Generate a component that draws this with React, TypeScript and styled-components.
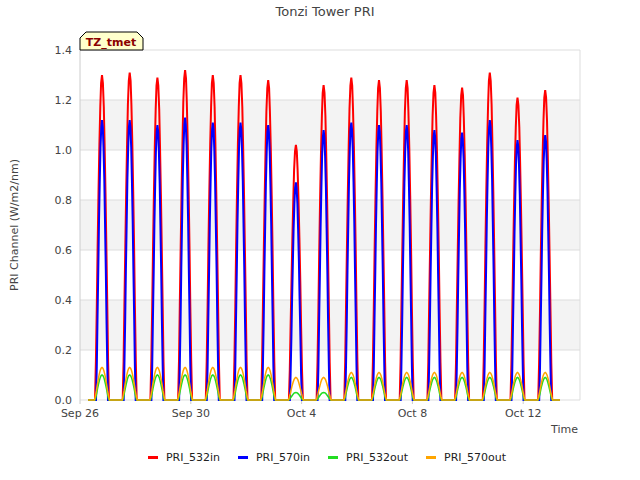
import React from "react";
import styled, { createGlobalStyle } from "styled-components";

const Global = createGlobalStyle`
  html, body { margin: 0; padding: 0; background: #fff; }
  body { font-family: "DejaVu Sans", sans-serif; }
`;
const Page = styled.div`
  width: 640px; height: 480px; display: flex; flex-direction: column; align-items: center;
`;
const Title = styled.div`
  height: 25px; line-height: 24px; font-size: 13px; color: #444; padding-left: 10px;
`;
const Legend = styled.div`
  display: flex; gap: 18px; font-size: 11px; color: #222; margin-top: 6px; padding-left: 14px;
`;
const Item = styled.div`
  display: flex; align-items: center; gap: 8px;
`;
const Swatch = styled.span<{ c: string }>`
  width: 10px; height: 3px; background: ${(p) => p.c};
`;

const X0 = 80, X1 = 580, Y0 = 400;
const py = (v: number) => Y0 - v * 250;
const red = [1.30,1.31,1.29,1.32,1.30,1.30,1.28,1.02,1.26,1.29,1.28,1.28,1.26,1.25,1.31,1.21,1.24];
const blue = [1.12,1.12,1.10,1.13,1.11,1.11,1.10,0.87,1.08,1.11,1.10,1.10,1.08,1.07,1.12,1.04,1.06];
const green = red.map((_, i) => (i === 7 || i === 8 ? 0.03 : i < 9 ? 0.1 : 0.09));
const orange = red.map((_, i) => (i === 7 || i === 8 ? 0.09 : i < 9 ? 0.13 : 0.11));

function series(h: number[], hw: number) {
  let d = `M${X0 + 8},${Y0}`;
  h.forEach((v, i) => {
    const c = 102 + i * 27.7;
    d += ` L${(c - hw).toFixed(1)},${Y0}`;
    for (let k = 0; k <= 16; k++) {
      const t = k / 16;
      const x = c - hw + t * hw * 2;
      const y = py(v * Math.pow(Math.sin(Math.PI * t), 1.3));
      d += ` L${x.toFixed(1)},${y.toFixed(1)}`;
    }
  });
  d += ` L560,${Y0}`;
  return d;
}

const Chart = () => (
  <svg width={640} height={420} viewBox="0 25 640 420">
    {[0, 1, 2, 3, 4, 5, 6].map((i) => (
      <rect key={i} x={X0} y={py((i + 1) * 0.2)} width={X1 - X0} height={50} fill={i % 2 === 0 ? "#fff" : "#f3f3f3"} />
    ))}
    {[0, 1, 2, 3, 4, 5, 6, 7].map((i) => (
      <g key={i}>
        <line x1={X0} x2={X1} y1={py(i * 0.2)} y2={py(i * 0.2)} stroke="#ddd" />
        <text x={72} y={py(i * 0.2) + 4} fontSize={11} fill="#444" textAnchor="end">{(i * 0.2).toFixed(1)}</text>
      </g>
    ))}
    <line x1={X0} x2={X0} y1={50} y2={400} stroke="#ccc" />
    <line x1={X1} x2={X1} y1={50} y2={400} stroke="#ddd" />
    {[["Sep 26", 80], ["Sep 30", 190.8], ["Oct 4", 301.6], ["Oct 8", 412.4], ["Oct 12", 523.2]].map(([l, x]) => (
      <g key={l as string}>
        <line x1={x as number} x2={x as number} y1={400} y2={404} stroke="#ccc" />
        <text x={x as number} y={417} fontSize={11} fill="#444" textAnchor="middle">{l}</text>
      </g>
    ))}
    <text x={578} y={433} fontSize={11} fill="#444" textAnchor="end">Time</text>
    <text x={18} y={225} fontSize={11} fill="#444" textAnchor="middle" transform="rotate(-90 18 225)">PRI Channel (W/m2/nm)</text>
    <path d={series(red, 7)} fill="none" stroke="red" strokeWidth={2} />
    <path d={series(blue, 6)} fill="none" stroke="blue" strokeWidth={2} />
    <path d={series(green, 7)} fill="none" stroke="#22dd22" strokeWidth={1.5} />
    <path d={series(orange, 7.5)} fill="none" stroke="orange" strokeWidth={1.5} />
    <path d="M80,50 L80,38 L86,32 L137,32 L143,38 L143,50 Z" fill="#ffffcc" stroke="#000" />
    <text x={111} y={46} fontSize={11} fontWeight="bold" fill="#8b0000" textAnchor="middle">TZ_tmet</text>
  </svg>
);

export default function App() {
  return (
    <Page>
      <Global />
      <Title>Tonzi Tower PRI</Title>
      <Chart />
      <Legend>
        <Item><Swatch c="red" />PRI_532in</Item>
        <Item><Swatch c="blue" />PRI_570in</Item>
        <Item><Swatch c="#22dd22" />PRI_532out</Item>
        <Item><Swatch c="orange" />PRI_570out</Item>
      </Legend>
    </Page>
  );
}
